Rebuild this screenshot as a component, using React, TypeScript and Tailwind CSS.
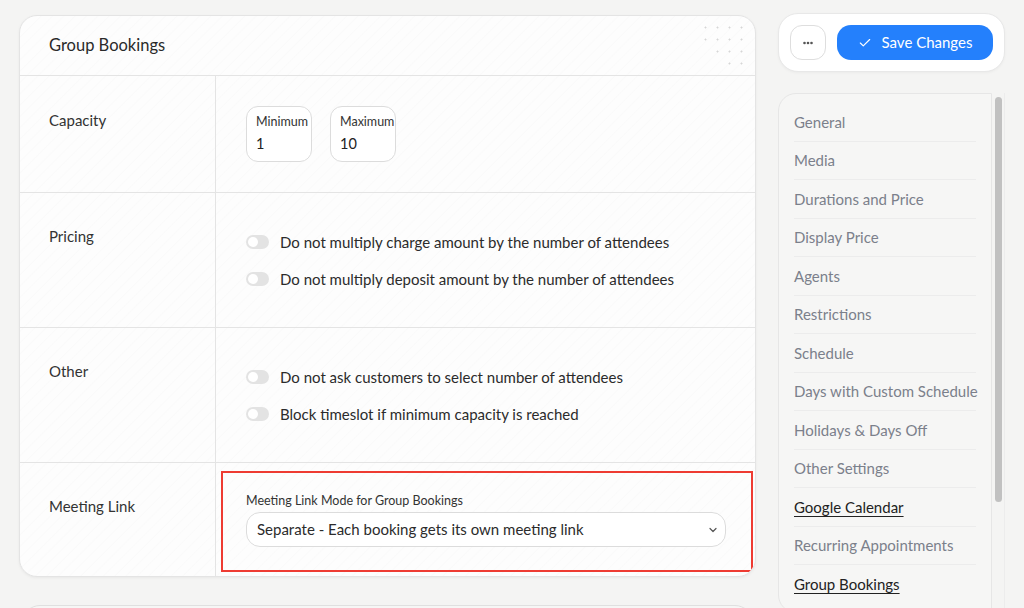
import React from 'react'
import { Check } from 'lucide-react'

const font = { fontFamily: 'Lato, "Open Sans", sans-serif' }

const navItems = [
  { label: 'General' },
  { label: 'Media' },
  { label: 'Durations and Price' },
  { label: 'Display Price' },
  { label: 'Agents' },
  { label: 'Restrictions' },
  { label: 'Schedule' },
  { label: 'Days with Custom Schedule' },
  { label: 'Holidays & Days Off' },
  { label: 'Other Settings' },
  { label: 'Google Calendar', active: true },
  { label: 'Recurring Appointments' },
  { label: 'Group Bookings', active: true, last: true },
]

function Toggle({ label }: { label: string }) {
  return (
    <div className="flex items-center gap-[11px]">
      <span className="relative w-[23px] h-[14px] rounded-full bg-[#e3e3e3]">
        <span className="absolute left-[2px] top-[2px] w-[10px] h-[10px] rounded-full bg-white" />
      </span>
      <span className="text-[15px] leading-[22px] text-[#2b2b2b]">{label}</span>
    </div>
  )
}

function NumberBox({ label, value }: { label: string; value: string }) {
  return (
    <div className="w-[66px] h-[56px] rounded-[12px] border border-[#dcdcdc] bg-white pl-[9px] pt-[6px] overflow-hidden">
      <div className="text-[12.5px] leading-[18px] text-[#333] whitespace-nowrap">{label}</div>
      <div className="text-[14.5px] leading-[26px] text-[#222]">{value}</div>
    </div>
  )
}

// faint "+" grid in the card corner
function DotGrid() {
  const rows = [
    [0, 1, 2, 3],
    [0, 1, 2, 3],
    [1, 2, 3],
    [2, 3],
  ]
  return (
    <svg className="absolute right-[8px] top-[9px]" width="44" height="44" viewBox="0 0 44 44">
      {rows.map((cols, r) =>
        cols.map((c) => (
          <g key={`${r}-${c}`} stroke="#d6d6d6" strokeWidth="1">
            <line x1={c * 12 + 1.5} y1={r * 12 + 2.5} x2={c * 12 + 3.5} y2={r * 12 + 2.5} />
            <line x1={c * 12 + 2.5} y1={r * 12 + 1.5} x2={c * 12 + 2.5} y2={r * 12 + 3.5} />
          </g>
        ))
      )}
    </svg>
  )
}

export default function App() {
  return (
    <div
      className="w-[1024px] h-[608px] overflow-hidden bg-[#f4f4f3] flex pl-[19px] pt-[15px] gap-[22px]"
      style={font}
    >
      {/* Main settings card */}
      <div className="w-[737px] flex flex-col shrink-0">
        <div className="relative shrink-0 rounded-[18px] border border-[#e4e4e4] bg-[#fdfdfd] bg-[repeating-linear-gradient(135deg,#fdfdfd_0px,#fdfdfd_6px,#fafafa_7px,#fdfdfd_8px)] shadow-[0_1px_3px_rgba(0,0,0,0.05)] overflow-hidden">
          <div className="h-[60px] flex items-center pl-[29px] border-b border-[#e4e4e4]">
            <h1 className="text-[16.5px] text-[#2a2a2a]">Group Bookings</h1>
          </div>
          <DotGrid />

          {/* Capacity */}
          <div className="flex h-[117px] border-b border-[#e4e4e4]">
            <div className="w-[196px] shrink-0 border-r border-[#e4e4e4] pl-[29px] pt-[33px] text-[15px] text-[#333]">
              Capacity
            </div>
            <div className="flex-1 flex items-center pl-[30px] gap-[18px]">
              <NumberBox label="Minimum" value="1" />
              <NumberBox label="Maximum" value="10" />
            </div>
          </div>

          {/* Pricing */}
          <div className="flex h-[135px] border-b border-[#e4e4e4]">
            <div className="w-[196px] shrink-0 border-r border-[#e4e4e4] pl-[29px] pt-[32px] text-[15px] text-[#333]">
              Pricing
            </div>
            <div className="flex-1 flex flex-col justify-center pl-[30px] gap-[15px]">
              <Toggle label="Do not multiply charge amount by the number of attendees" />
              <Toggle label="Do not multiply deposit amount by the number of attendees" />
            </div>
          </div>

          {/* Other */}
          <div className="flex h-[135px] border-b border-[#e4e4e4]">
            <div className="w-[196px] shrink-0 border-r border-[#e4e4e4] pl-[29px] pt-[32px] text-[15px] text-[#333]">
              Other
            </div>
            <div className="flex-1 flex flex-col justify-center pl-[30px] gap-[15px]">
              <Toggle label="Do not ask customers to select number of attendees" />
              <Toggle label="Block timeslot if minimum capacity is reached" />
            </div>
          </div>

          {/* Meeting Link */}
          <div className="flex h-[113px]">
            <div className="w-[196px] shrink-0 border-r border-[#e4e4e4] pl-[29px] pt-[32px] text-[15px] text-[#333]">
              Meeting Link
            </div>
            <div className="flex-1 pl-[5px] pr-[2px] pt-[8px] pb-[4px]">
              <div className="h-full border-2 border-[#ee3b32] pl-[23px] pr-[25px] pt-[20px]">
                <div className="text-[12.5px] text-[#333] leading-[16px] mb-[3px]">
                  Meeting Link Mode for Group Bookings
                </div>
                <div className="h-[35px] rounded-[14px] border border-[#dcdcdc] bg-white flex items-center justify-between pl-[10px] pr-[8px]">
                  <span className="text-[15px] text-[#2b2b2b]">
                    Separate - Each booking gets its own meeting link
                  </span>
                  <svg width="8" height="6" viewBox="0 0 8 6" fill="none">
                    <path d="M1 1.5l3 3 3-3" stroke="#555" strokeWidth="1.2" strokeLinecap="round" strokeLinejoin="round" />
                  </svg>
                </div>
              </div>
            </div>
          </div>
        </div>

        {/* next card peeking in */}
        <div className="shrink-0 mt-[28px] mx-[3px] h-[40px] rounded-t-[18px] border border-[#e0e0e0] bg-[#f6f6f5]" />
      </div>

      {/* Right column */}
      <div className="w-[227px] shrink-0 flex flex-col -mt-[2px]">
        <div className="h-[59px] shrink-0 rounded-[20px] border border-[#e8e8e8] bg-white flex items-center pl-[11px] gap-[11px] shadow-[0_1px_3px_rgba(0,0,0,0.04)]">
          <button className="w-[36px] h-[35px] rounded-[12px] border border-[#dedede] bg-white flex items-center justify-center">
            <svg width="10" height="4" viewBox="0 0 10 4">
              <circle cx="1.5" cy="2" r="1.3" fill="#555" />
              <circle cx="5" cy="2" r="1.3" fill="#555" />
              <circle cx="8.5" cy="2" r="1.3" fill="#555" />
            </svg>
          </button>
          <button className="w-[156px] h-[35px] rounded-[14px] bg-[#2480fc] text-white flex items-center justify-center gap-[10px]">
            <Check size={14} strokeWidth={2} />
            <span className="text-[15px]">Save Changes</span>
          </button>
        </div>

        <div className="mt-[21px] flex h-[520px] shrink-0">
          <div className="w-[214px] rounded-l-[18px] border border-[#e6e6e6] bg-[#f6f6f5] px-[15px] pt-[9px]">
            {navItems.map((item) => (
              <div
                key={item.label}
                className={`h-[38.5px] flex items-center ${item.last ? '' : 'border-b border-[#ececec]'}`}
              >
                <span
                  className={`text-[15px] whitespace-nowrap ${
                    item.active ? 'text-[#222] underline underline-offset-[3px]' : 'text-[#7b808b]'
                  }`}
                >
                  {item.label}
                </span>
              </div>
            ))}
          </div>
          <div className="w-[13px] border-r border-[#ececec] pt-[4px] pl-[3px]">
            <div className="w-[7px] h-[405px] rounded-full bg-[#c1c1c1]" />
          </div>
        </div>
      </div>
    </div>
  )
}
